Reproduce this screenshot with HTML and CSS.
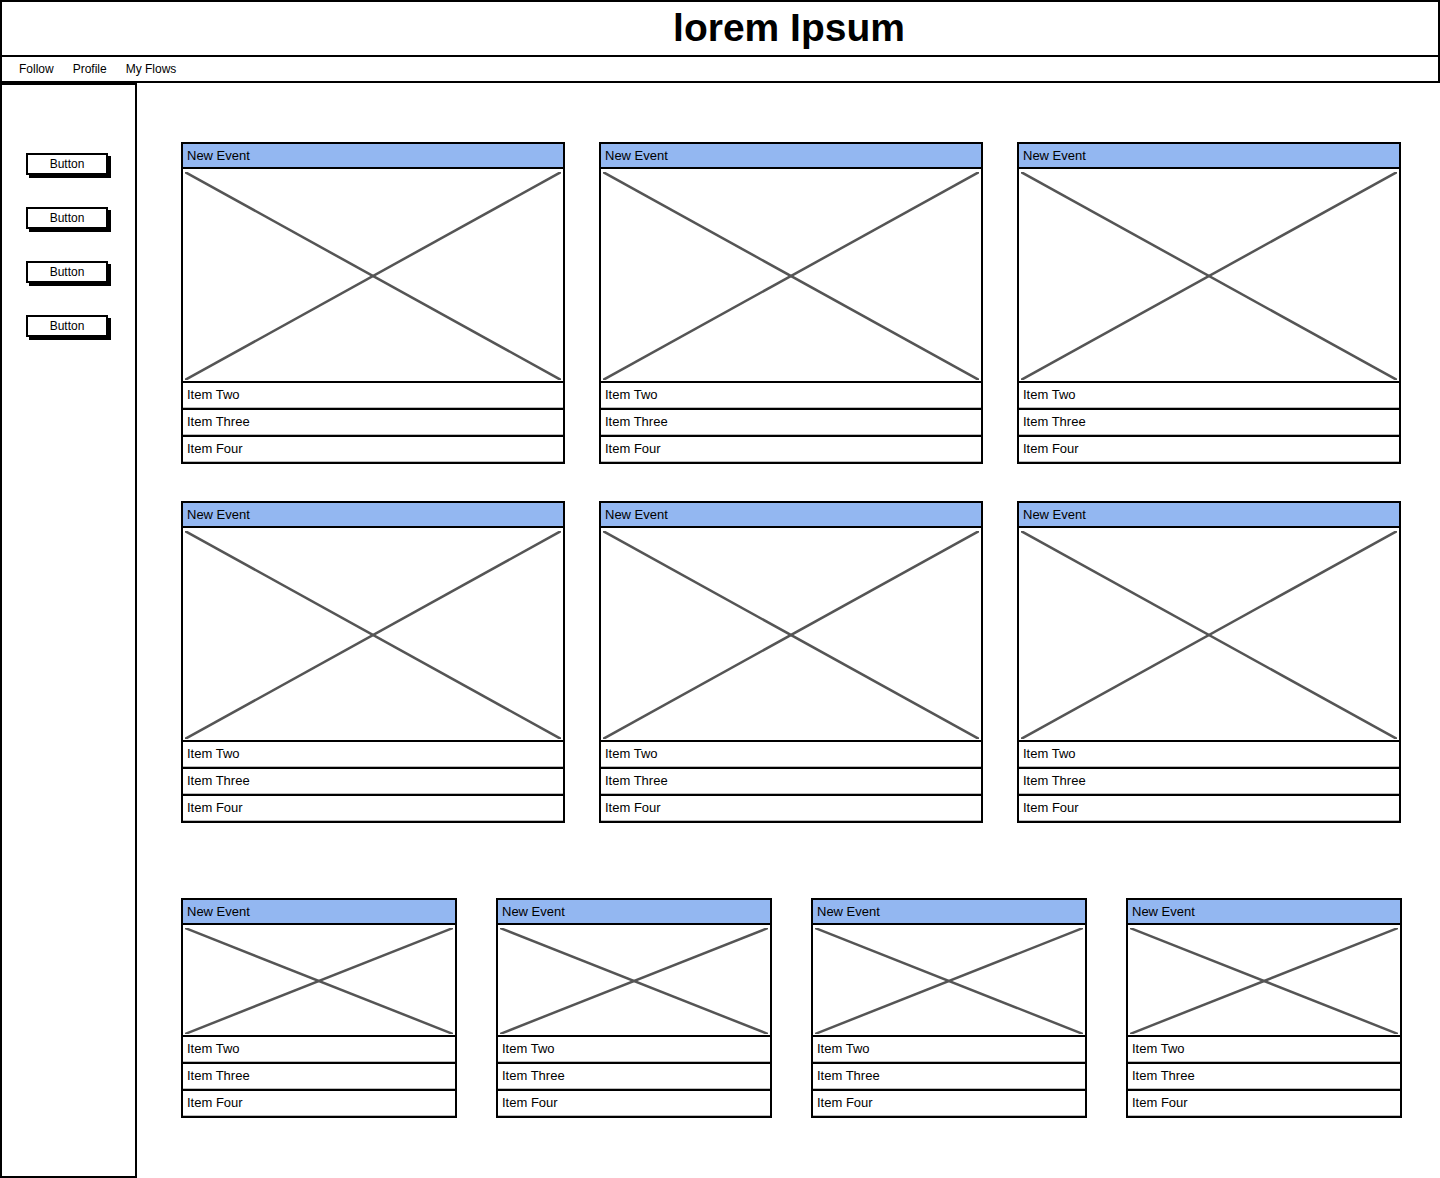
FILE: index.html
```html
<!DOCTYPE html>
<html lang="en">
<head>
<meta charset="utf-8">
<title>lorem Ipsum</title>
<link rel="stylesheet" href="styles.css">
</head>
<body>
<div class="page">
  <header class="header"><h1 class="title">lorem Ipsum</h1></header>
  <nav class="nav">
    <a class="nav-link">Follow</a>
    <a class="nav-link">Profile</a>
    <a class="nav-link">My Flows</a>
  </nav>
  <div class="main">
    <aside class="sidebar">
      <button class="btn">Button</button>
      <button class="btn">Button</button>
      <button class="btn">Button</button>
      <button class="btn">Button</button>
    </aside>
    <section class="content">
      <div class="row row-3">
        <div class="card"><div class="card-head">New Event</div><div class="ph"><svg viewBox="0 0 100 100" preserveAspectRatio="none"><line x1="0" y1="0" x2="100" y2="100"/><line x1="100" y1="0" x2="0" y2="100"/></svg></div><div class="item">Item Two</div><div class="item">Item Three</div><div class="item">Item Four</div></div>
        <div class="card"><div class="card-head">New Event</div><div class="ph"><svg viewBox="0 0 100 100" preserveAspectRatio="none"><line x1="0" y1="0" x2="100" y2="100"/><line x1="100" y1="0" x2="0" y2="100"/></svg></div><div class="item">Item Two</div><div class="item">Item Three</div><div class="item">Item Four</div></div>
        <div class="card"><div class="card-head">New Event</div><div class="ph"><svg viewBox="0 0 100 100" preserveAspectRatio="none"><line x1="0" y1="0" x2="100" y2="100"/><line x1="100" y1="0" x2="0" y2="100"/></svg></div><div class="item">Item Two</div><div class="item">Item Three</div><div class="item">Item Four</div></div>
      </div>
      <div class="row row-3 row-second">
        <div class="card"><div class="card-head">New Event</div><div class="ph"><svg viewBox="0 0 100 100" preserveAspectRatio="none"><line x1="0" y1="0" x2="100" y2="100"/><line x1="100" y1="0" x2="0" y2="100"/></svg></div><div class="item">Item Two</div><div class="item">Item Three</div><div class="item">Item Four</div></div>
        <div class="card"><div class="card-head">New Event</div><div class="ph"><svg viewBox="0 0 100 100" preserveAspectRatio="none"><line x1="0" y1="0" x2="100" y2="100"/><line x1="100" y1="0" x2="0" y2="100"/></svg></div><div class="item">Item Two</div><div class="item">Item Three</div><div class="item">Item Four</div></div>
        <div class="card"><div class="card-head">New Event</div><div class="ph"><svg viewBox="0 0 100 100" preserveAspectRatio="none"><line x1="0" y1="0" x2="100" y2="100"/><line x1="100" y1="0" x2="0" y2="100"/></svg></div><div class="item">Item Two</div><div class="item">Item Three</div><div class="item">Item Four</div></div>
      </div>
      <div class="row row-4">
        <div class="card card-sm"><div class="card-head">New Event</div><div class="ph"><svg viewBox="0 0 100 100" preserveAspectRatio="none"><line x1="0" y1="0" x2="100" y2="100"/><line x1="100" y1="0" x2="0" y2="100"/></svg></div><div class="item">Item Two</div><div class="item">Item Three</div><div class="item">Item Four</div></div>
        <div class="card card-sm"><div class="card-head">New Event</div><div class="ph"><svg viewBox="0 0 100 100" preserveAspectRatio="none"><line x1="0" y1="0" x2="100" y2="100"/><line x1="100" y1="0" x2="0" y2="100"/></svg></div><div class="item">Item Two</div><div class="item">Item Three</div><div class="item">Item Four</div></div>
        <div class="card card-sm"><div class="card-head">New Event</div><div class="ph"><svg viewBox="0 0 100 100" preserveAspectRatio="none"><line x1="0" y1="0" x2="100" y2="100"/><line x1="100" y1="0" x2="0" y2="100"/></svg></div><div class="item">Item Two</div><div class="item">Item Three</div><div class="item">Item Four</div></div>
        <div class="card card-sm"><div class="card-head">New Event</div><div class="ph"><svg viewBox="0 0 100 100" preserveAspectRatio="none"><line x1="0" y1="0" x2="100" y2="100"/><line x1="100" y1="0" x2="0" y2="100"/></svg></div><div class="item">Item Two</div><div class="item">Item Three</div><div class="item">Item Four</div></div>
      </div>
    </section>
  </div>
</div>
</body>
</html>
```

FILE: styles.css
```css
* { box-sizing: border-box; }
html, body { margin: 0; padding: 0; background: #fff; }
body {
  font-family: "Liberation Sans", Arial, sans-serif;
  font-size: 13px;
  color: #000;
}
.page {
  width: 1440px;
  height: 1178px;
  display: flex;
  flex-direction: column;
}
.header {
  height: 58px;
  width: 1440px;
  border: 2px solid #000;
  display: flex;
  align-items: center;
  justify-content: center;
  padding-left: 138px;
}
.title {
  margin: 0;
  font-family: "Liberation Sans", Arial, sans-serif;
  font-weight: bold;
  font-size: 39px;
  line-height: 1;
  margin-top: -2px;
}
.nav {
  height: 26px;
  width: 1440px;
  border: 2px solid #000;
  border-top: none;
  display: flex;
  align-items: center;
  gap: 19px;
  padding-left: 17px;
}
.nav-link { color: #000; font-size: 12px; }
.main {
  flex: 1;
  display: flex;
  align-items: stretch;
}
.sidebar {
  width: 137px;
  height: 1095px;
  border: 2px solid #000;
  display: flex;
  flex-direction: column;
  align-items: flex-start;
  gap: 32px;
  padding-top: 68px;
  padding-left: 24px;
}
.btn {
  width: 82px;
  height: 22px;
  border: 2px solid #000;
  background: #fff;
  box-shadow: 3px 3px 0 #000;
  font-family: "Liberation Sans", Arial, sans-serif;
  font-size: 12px;
  color: #000;
  padding: 0;
  line-height: 18px;
}
.content {
  flex: 1;
  padding-top: 59px;
  padding-left: 44px;
}
.row { display: grid; }
.row-3 {
  grid-template-columns: repeat(3, 384px);
  column-gap: 34px;
}
.row-second { margin-top: 37px; }
.row-4 {
  margin-top: 75px;
  grid-template-columns: repeat(4, 276px);
  column-gap: 39px;
}
.card { display: flex; flex-direction: column; }
.card-head {
  height: 27px;
  background: #93b7f1;
  border: 2px solid #000;
  padding-left: 4px;
  line-height: 23px;
  font-size: 13px;
}
.ph {
  height: 214px;
  border: 2px solid #000;
  border-top: none;
  padding: 3px 2px 1px 2px;
}
.card-sm .ph { height: 112px; }
.ph svg {
  display: block;
  width: 100%;
  height: 100%;
}
.ph line {
  stroke: #555;
  stroke-width: 2.5;
  vector-effect: non-scaling-stroke;
}
.item {
  height: 27px;
  border: 2px solid #000;
  border-top: none;
  padding-left: 4px;
  line-height: 24px;
  font-size: 13px;
  box-shadow: inset 0 -1px 0 #bbb;
}
```
